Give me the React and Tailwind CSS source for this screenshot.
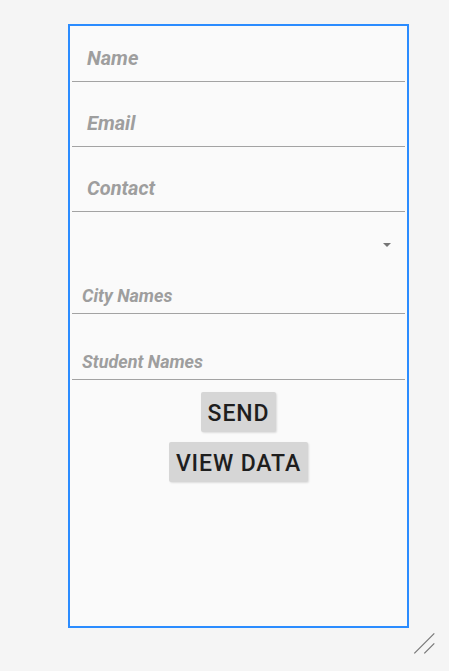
import React from "react";

const font = { fontFamily: "Roboto, 'Noto Sans', sans-serif" };

const Field = ({ label, height }) => (
  <div className={`flex items-end border-b border-[#a3a3a3] ${height}`}>
    <span className="pl-[15px] pb-[11px] text-[20px] leading-[24px] font-bold italic text-[#9e9e9e]">
      {label}
    </span>
  </div>
);

const SmallField = ({ label, height }) => (
  <div className={`flex items-end border-b border-[#a3a3a3] ${height}`}>
    <span className="pl-[10px] pb-[7px] text-[18px] leading-[20px] font-bold italic text-[#9e9e9e]">
      {label}
    </span>
  </div>
);

export default function App() {
  return (
    <div className="relative w-[449px] h-[671px] bg-[#f5f5f5] overflow-hidden" style={font}>
      {/* form frame */}
      <div className="ml-[68px] mt-[24px] w-[341px] h-[604px] border-2 border-[#2b8cff] bg-[#fafafa] px-[2px]">
        <Field label="Name" height="h-[56px]" />
        <Field label="Email" height="h-[65px]" />
        <Field label="Contact" height="h-[65px]" />

        {/* spinner */}
        <div className="flex justify-end items-start h-[57px] pt-[31px] pr-[14px]">
          <div className="w-0 h-0 border-l-[4px] border-r-[4px] border-t-[4px] border-l-transparent border-r-transparent border-t-[#757575]"></div>
        </div>

        <SmallField label="City Names" height="h-[45px]" />
        <SmallField label="Student Names" height="h-[66px]" />

        <div className="flex flex-col items-center pt-[12px] gap-[10px]">
          <button className="h-[40px] pt-[3px] pl-[7px] pr-[7px] bg-[#d6d6d6] rounded-[2px] shadow-[1px_1px_2px_rgba(0,0,0,0.12)] text-[23px] leading-[30px] tracking-[0.9px] font-medium text-[#1e1e1e]">
            SEND
          </button>
          <button className="h-[40px] pt-[3px] pl-[7px] pr-[7px] bg-[#d6d6d6] rounded-[2px] shadow-[1px_1px_2px_rgba(0,0,0,0.12)] text-[23px] leading-[30px] tracking-[0.9px] font-medium text-[#1e1e1e]">
            VIEW DATA
          </button>
        </div>
      </div>

      {/* resize handle */}
      <svg className="absolute left-[412px] top-[631px]" width="25" height="25" viewBox="0 0 25 25">
        <line x1="2.3" y1="22.3" x2="22.3" y2="2.3" stroke="#777" strokeWidth="1.2" />
        <line x1="12.3" y1="22.3" x2="22.3" y2="12.3" stroke="#777" strokeWidth="1.2" />
      </svg>
    </div>
  );
}
